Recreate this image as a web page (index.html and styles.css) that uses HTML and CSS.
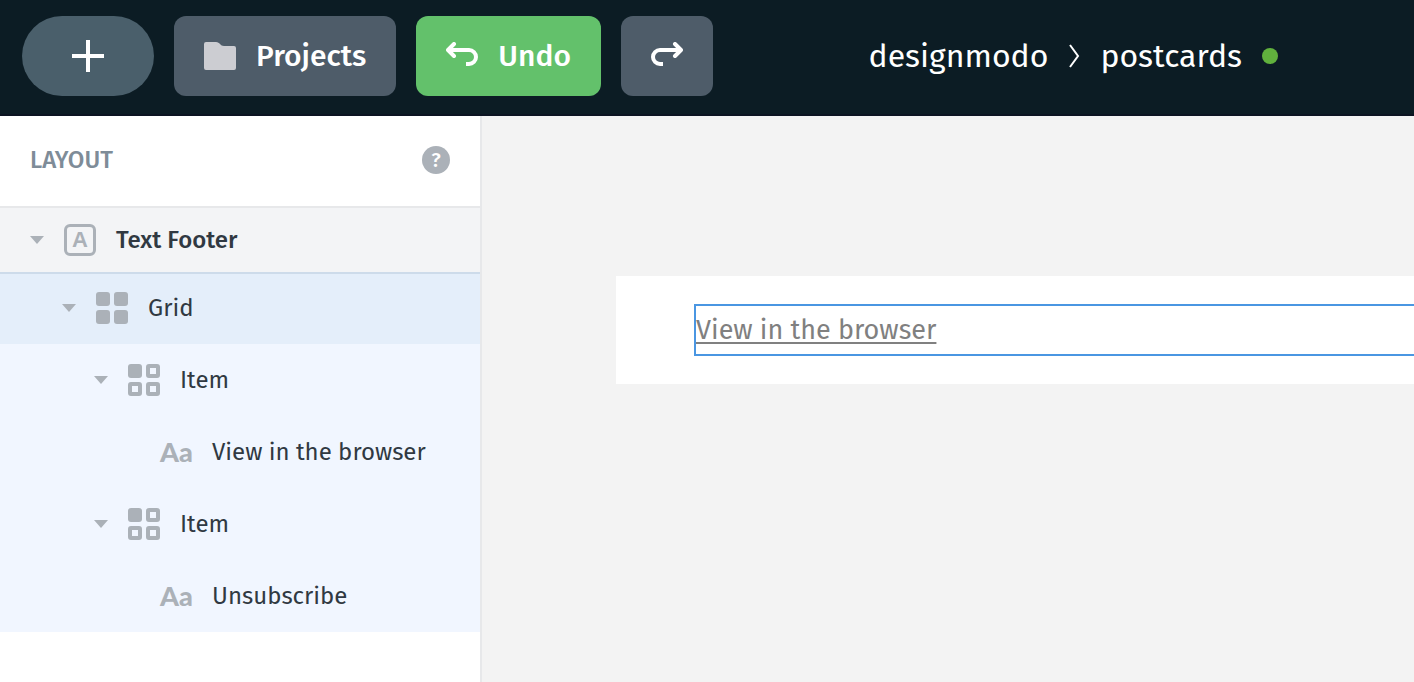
FILE: index.html
```html
<!DOCTYPE html>
<html lang="en">
    <head>
        <meta charset="utf-8">
        <meta name="viewport" content="width=device-width, initial-scale=1">
        <title>designmodo - postcards</title>

        <link rel="stylesheet" href="styles.css">
    </head>
    <body>
        <!-- shared icons -->
        <svg class="sprite" aria-hidden="true">
            <symbol id="caret" viewBox="0 0 14 8"><path d="M0 0h14L7 8z"/></symbol>
            <symbol id="item" viewBox="0 0 32 32">
                <rect width="14" height="14" rx="3"/>
                <path fill-rule="evenodd" d="M21 0h8a3 3 0 0 1 3 3v8a3 3 0 0 1-3 3h-8a3 3 0 0 1-3-3V3a3 3 0 0 1 3-3zm1 4v6h6V4z"/>
                <path fill-rule="evenodd" d="M3 18h8a3 3 0 0 1 3 3v8a3 3 0 0 1-3 3H3a3 3 0 0 1-3-3v-8a3 3 0 0 1 3-3zm1 4v6h6v-6z"/>
                <path fill-rule="evenodd" d="M21 18h8a3 3 0 0 1 3 3v8a3 3 0 0 1-3 3h-8a3 3 0 0 1-3-3v-8a3 3 0 0 1 3-3zm1 4v6h6v-6z"/>
            </symbol>
        </svg>

        <header class="header">
            <button class="btn btn-add" aria-label="Add">
                <svg width="32" height="32" viewBox="0 0 32 32"><path d="M14 0h4v14h14v4H18v14h-4V18H0v-4h14z"/></svg>
            </button>
            <button class="btn">
                <svg class="folder" width="32" height="28" viewBox="0 0 32 28"><path d="M2 0h10c2 0 3 1 4 2s2 2 4 2h10a2 2 0 0 1 2 2v20a2 2 0 0 1-2 2H2a2 2 0 0 1-2-2V2a2 2 0 0 1 2-2z"/></svg>
                Projects
            </button>
            <button class="btn btn-undo">
                <svg class="arrow" width="32" height="28" viewBox="0 0 32 28"><path d="M8 2L2 8l6 6"/><path class="tail" d="M2 8h21a7 7 0 0 1 0 14h-3"/></svg>
                Undo
            </button>
            <button class="btn" aria-label="Redo">
                <svg class="arrow" width="32" height="28" viewBox="0 0 32 28"><path d="M24 2l6 6-6 6"/><path class="tail" d="M30 8H9a7 7 0 0 0 0 14h3"/></svg>
            </button>

            <nav class="breadcrumb">
                <a href="#">designmodo</a>
                <svg class="chevron" width="12" height="24" viewBox="0 0 12 24"><path d="M2 1l8 11-8 11"/></svg>
                <a href="#">postcards</a>
                <span class="status"></span>
            </nav>
        </header>

        <div class="main">
            <aside class="sidebar">
                <div class="panel-title">
                    <h2>LAYOUT</h2>
                    <button class="help">?</button>
                </div>

                <ul class="layers">
                    <li class="layer layer-root">
                        <svg class="caret"><use href="#caret"/></svg>
                        <span class="icon icon-box">A</span>
                        Text Footer
                    </li>
                    <li class="layer layer-selected level-1">
                        <svg class="caret"><use href="#caret"/></svg>
                        <svg class="icon" viewBox="0 0 32 32">
                            <rect width="14" height="14" rx="3"/>
                            <rect x="18" width="14" height="14" rx="3"/>
                            <rect y="18" width="14" height="14" rx="3"/>
                            <rect x="18" y="18" width="14" height="14" rx="3"/>
                        </svg>
                        Grid
                    </li>
                    <li class="layer level-2">
                        <svg class="caret"><use href="#caret"/></svg>
                        <svg class="icon"><use href="#item"/></svg>
                        Item
                    </li>
                    <li class="layer level-3">
                        <span class="icon icon-text">Aa</span>
                        View in the browser
                    </li>
                    <li class="layer level-2">
                        <svg class="caret"><use href="#caret"/></svg>
                        <svg class="icon"><use href="#item"/></svg>
                        Item
                    </li>
                    <li class="layer level-3">
                        <span class="icon icon-text">Aa</span>
                        Unsubscribe
                    </li>
                </ul>
            </aside>

            <main class="canvas">
                <div class="email">
                    <div class="selection"><a href="#">View in the browser</a></div>
                </div>
            </main>
        </div>
    </body>
</html>
```
FILE: styles.css
```css
* {
    box-sizing: border-box;
}

body {
    display: flex;
    flex-direction: column;
    min-height: 100vh;
    margin: 0;
    font-family: "Fira Sans", "Noto Sans", sans-serif;
    font-size: 24px;
    color: #303942;
    background-color: #f3f3f3;
}

.sprite {
    display: none;
}

.header {
    display: flex;
    align-items: center;
    gap: 20px;
    padding: 16px 136px 18px 22px;
    background-color: #0c1c24;
    border-bottom: 2px solid #0c1422;
}

.btn {
    display: flex;
    align-items: center;
    gap: 20px;
    height: 80px;
    padding: 0 30px;
    border: 0;
    border-radius: 12px;
    font-family: inherit;
    font-size: 30px;
    font-weight: 500;
    color: white;
    background-color: #4e5c69;
    cursor: pointer;
}

.btn svg {
    fill: white;
}

.btn-add {
    padding: 0 50px;
    border-radius: 40px;
    background-color: #4a5f6b;
}

.btn-undo {
    background-color: #63c16b;
}

.btn .folder {
    fill: #cccdd2;
}

.btn .arrow {
    fill: none;
    stroke: white;
    stroke-width: 4;
    stroke-linecap: round;
    stroke-linejoin: round;
}

.btn .tail {
    stroke-linecap: butt;
}

.breadcrumb {
    display: flex;
    align-items: center;
    gap: 20px;
    margin-left: auto;
    font-size: 32px;
}

.breadcrumb a {
    color: white;
    text-decoration: none;
}

.chevron {
    fill: none;
    stroke: white;
    stroke-width: 2;
}

.status {
    width: 16px;
    height: 16px;
    border-radius: 50%;
    background-color: #61b13d;
}

.main {
    display: flex;
    flex: 1;
}

.sidebar {
    flex: none;
    width: 482px;
    border-right: 2px solid #e7e8ea;
    background-color: white;
}

.panel-title {
    display: flex;
    align-items: center;
    justify-content: space-between;
    height: 92px;
    padding: 0 30px 2px;
    border-bottom: 2px solid #e7e8ea;
}

.panel-title h2 {
    margin: 0;
    font-size: 24px;
    font-weight: 500;
    color: #7e8c98;
}

.help {
    width: 28px;
    height: 28px;
    padding: 0;
    border: 0;
    border-radius: 50%;
    font-family: inherit;
    font-size: 20px;
    font-weight: 500;
    line-height: 28px;
    color: white;
    background-color: #abb1b8;
}

.layers {
    margin: 0;
    padding: 0;
    list-style: none;
}

.layer {
    display: flex;
    align-items: center;
    gap: 20px;
    height: 72px;
    padding-left: 30px;
    background-color: #f1f6ff;
}

.layer-root {
    height: 66px;
    border-bottom: 2px solid #cddbea;
    font-weight: 500;
    background-color: #f3f4f6;
}

.layer-selected {
    height: 70px;
    padding-bottom: 2px;
    background-color: #e4eefa;
}

.level-1 {
    padding-left: 62px;
}

.level-2 {
    padding-left: 94px;
}

.level-3 {
    padding-left: 160px;
}

.caret {
    width: 14px;
    height: 8px;
    fill: #abb1b8;
}

.icon {
    flex: none;
    width: 32px;
    height: 32px;
    fill: #abb1b8;
    color: #abb1b8;
    line-height: 32px;
}

.icon-box {
    border: 3px solid #abb1b8;
    border-radius: 6px;
    font-family: "Liberation Sans", sans-serif;
    font-size: 22px;
    font-weight: bold;
    line-height: 26px;
    text-align: center;
}

.icon-text {
    font-family: "Lato", sans-serif;
    font-size: 27px;
    font-weight: 900;
}

.canvas {
    flex: 1;
    padding: 160px 0 0 134px;
}

.email {
    padding: 28px 0 28px 78px;
    background-color: white;
}

/* runs on past the right edge of the window */
.selection {
    height: 52px;
    border: 2px solid #4a96e2;
    border-right: 0;
    font-size: 27px;
    line-height: 48px;
}

.selection a {
    color: #808080;
    text-decoration-thickness: 2px;
    text-underline-offset: 3px;
}
```
